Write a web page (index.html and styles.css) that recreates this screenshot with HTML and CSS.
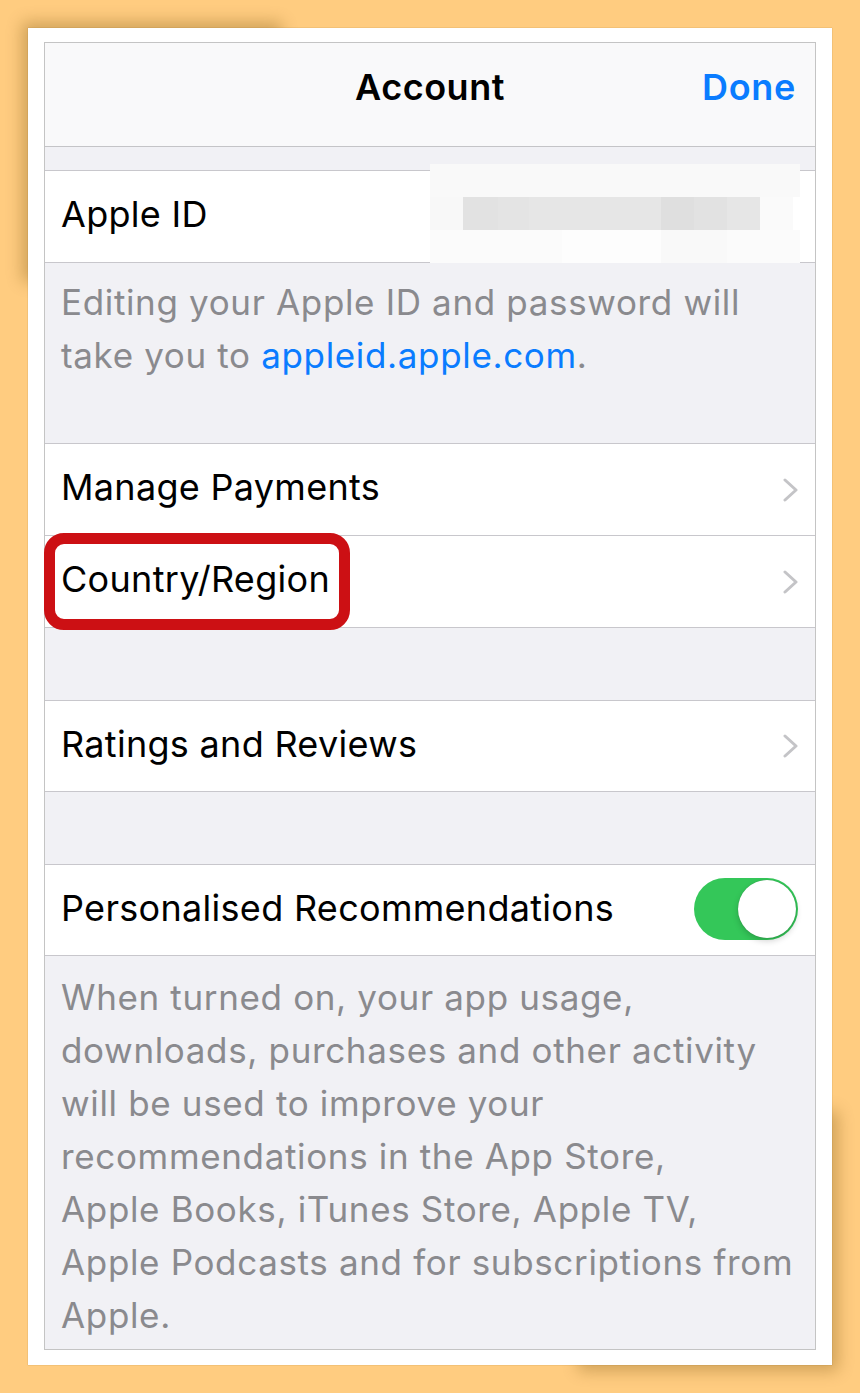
FILE: index.html
```html
<!DOCTYPE html>
<html lang="en">
<head>
<meta charset="utf-8">
<title>Account</title>
<link rel="stylesheet" href="styles.css">
</head>
<body>
<div class="frame">
  <div class="screen">
    <header class="nav">
      <span></span>
      <span class="nav-title">Account</span>
      <span class="nav-done">Done</span>
    </header>
    <div class="top-gap"></div>

    <section class="group">
      <div class="row">
        <span class="label">Apple ID</span>
        <div class="masked" aria-hidden="true">
          <div class="mask-top"></div>
          <div class="mask-mid"></div>
          <div class="mask-bot"></div>
        </div>
      </div>
    </section>
    <div class="footer footer-short">
      Editing your Apple ID and password will<br>
      take you to <span class="link">appleid.apple.com</span>.
    </div>

    <section class="group">
      <div class="row">
        <span class="label">Manage Payments</span>
        <svg class="chev" viewBox="0 0 15 24" width="15" height="24"><polyline points="2,2 13,12 2,22"/></svg>
      </div>
      <div class="row">
        <span class="label">Country/Region</span>
        <svg class="chev" viewBox="0 0 15 24" width="15" height="24"><polyline points="2,2 13,12 2,22"/></svg>
        <div class="highlight"></div>
      </div>
    </section>

    <div class="gap"></div>

    <section class="group compact">
      <div class="row">
        <span class="label">Ratings and Reviews</span>
        <svg class="chev" viewBox="0 0 15 24" width="15" height="24"><polyline points="2,2 13,12 2,22"/></svg>
      </div>
    </section>

    <div class="gap"></div>

    <section class="group compact">
      <div class="row">
        <span class="label">Personalised Recommendations</span>
        <div class="switch on"><div class="knob"></div></div>
      </div>
    </section>
    <div class="footer footer-long">
      When turned on, your app usage,<br>
      downloads, purchases and other activity<br>
      will be used to improve your<br>
      recommendations in the App Store,<br>
      Apple Books, iTunes Store, Apple TV,<br>
      Apple Podcasts and for subscriptions from<br>
      Apple.
    </div>
  </div>
</div>
</body>
</html>
```

FILE: styles.css
```css
* { box-sizing: border-box; }

html, body {
  margin: 0;
  padding: 0;
}

body {
  background: #ffcc80;
  padding: 28px;
  font-family: Inter, "Liberation Sans", "Noto Sans", sans-serif;
  -webkit-font-smoothing: antialiased;
}

.frame {
  position: relative;
  width: 804px;
  height: 1337px;
  background: #fff;
  padding: 14px 16px 15px 16px;
  box-shadow: 0 0 1px rgba(140, 100, 30, 0.6);
}

.frame::before,
.frame::after {
  content: "";
  position: absolute;
  z-index: -1;
  width: 260px;
  height: 260px;
}

.frame::before {
  top: 0;
  left: 0;
  border-radius: 0 0 100% 0;
  box-shadow: -6px -6px 16px rgba(110, 75, 10, 0.32);
}

.frame::after {
  right: 0;
  bottom: 0;
  border-radius: 100% 0 0 0;
  box-shadow: 6px 6px 16px rgba(110, 75, 10, 0.32);
}

.screen {
  width: 772px;
  height: 1308px;
  border: 1px solid #c4c4c4;
  background: #f1f1f5;
  display: flex;
  flex-direction: column;
}

.nav {
  height: 104px;
  flex: none;
  background: #f9f9fa;
  border-bottom: 1px solid #c4c4c7;
  display: grid;
  grid-template-columns: 1fr auto 1fr;
  align-items: center;
  padding: 0 19px 15px 19px;
}

.nav-title {
  font-size: 36px;
  font-weight: 600;
  color: #000;
  letter-spacing: 0.5px;
}

.nav-done {
  justify-self: end;
  font-size: 36px;
  font-weight: 600;
  color: #0a7cff;
  letter-spacing: 0.7px;
}

.top-gap {
  height: 23px;
  flex: none;
}

.gap {
  height: 72px;
  flex: none;
}

.group {
  flex: none;
  background: #fff;
  border-top: 1px solid #c8c7cc;
  border-bottom: 1px solid #c8c7cc;
}

.row {
  position: relative;
  height: 91px;
  display: flex;
  align-items: center;
  justify-content: space-between;
  padding: 0 17px 5px 16px;
}

.row + .row {
  height: 92px;
  border-top: 1px solid #c8c7cc;
}

.group.compact .row {
  height: 90px;
}

.label {
  font-size: 36px;
  color: #000;
  letter-spacing: 0.3px;
  white-space: nowrap;
}

.chev {
  flex: none;
  margin-top: 5px;
}

.chev polyline {
  fill: none;
  stroke: #c4c4c7;
  stroke-width: 3;
  stroke-linecap: round;
  stroke-linejoin: round;
}

.footer {
  flex: none;
  font-size: 35px;
  line-height: 53px;
  color: #8a8a8e;
  padding: 13px 16px 0 16px;
  white-space: nowrap;
  letter-spacing: 0.65px;
}

.footer-short {
  height: 180px;
}

.footer-long {
  flex: 1;
  padding-top: 15px;
}

.link {
  color: #0a7cff;
}

/* pixelated redaction of the Apple ID value */
.masked {
  position: absolute;
  top: -7px;
  left: 385px;
  width: 370px;
  height: 99px;
  display: flex;
  flex-direction: column;
}

.mask-top {
  height: 33px;
  background: #f9f9f9;
}

.mask-mid {
  height: 33px;
  background: linear-gradient(to right,
    #f8f8f8 0 33px,
    #e2e2e2 33px 68px,
    #e4e4e4 68px 99px,
    #e6e6e6 99px 231px,
    #dfdfdf 231px 264px,
    #e2e2e2 264px 297px,
    #e6e6e6 297px 330px,
    #fafafa 330px 363px,
    #ffffff 363px 370px);
}

.mask-bot {
  height: 33px;
  background: linear-gradient(to right,
    #fbfbfb 0 132px,
    #fdfdfd 132px 231px,
    #f9f9f9 231px 297px,
    #fbfbfb 297px 370px);
}

/* red annotation around Country/Region */
.highlight {
  position: absolute;
  top: -3px;
  left: -1px;
  width: 306px;
  height: 97px;
  border: 11px solid #cc1014;
  border-radius: 20px;
}

.switch {
  flex: none;
  position: relative;
  width: 104px;
  height: 62px;
  border-radius: 31px;
  background: #34c759;
  margin-top: 3px;
}

.knob {
  position: absolute;
  top: 2px;
  right: 2px;
  width: 58px;
  height: 58px;
  border-radius: 50%;
  background: #fff;
  box-shadow: 0 3px 6px rgba(0, 0, 0, 0.18), 0 0 1px rgba(0, 0, 0, 0.25);
}
```
